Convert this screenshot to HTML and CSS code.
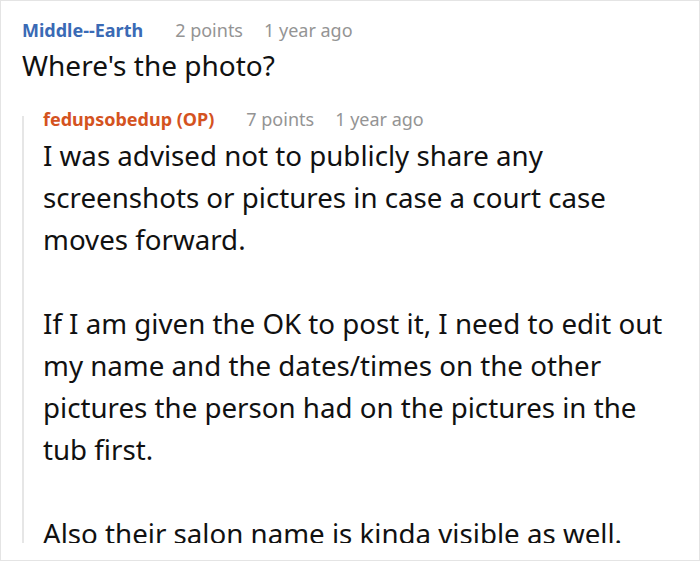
FILE: index.html
```html
<!DOCTYPE html>
<html>
<head>
<meta charset="utf-8">
<link rel="stylesheet" href="styles.css">
</head>
<body>
<div class="frame">
  <div class="clip">
    <div class="comment">
      <div class="meta">
        <span class="author blue">Middle--Earth</span>
        <span class="points">2 points</span>
        <span class="time">1 year ago</span>
      </div>
      <div class="text">Where's the photo?</div>
      <div class="reply">
        <div class="meta reply-meta">
          <span class="author orange">fedupsobedup (OP)</span>
          <span class="points">7 points</span>
          <span class="time">1 year ago</span>
        </div>
        <div class="body">
          <p>I was advised not to publicly share any screenshots or pictures in case a court case moves forward.</p>
          <p>If I am given the OK to post it, I need to edit out my name and the dates/times on the other pictures the person had on the pictures in the tub first.</p>
          <p>Also their salon name is kinda visible as well.</p>
        </div>
      </div>
    </div>
  </div>
</div>
</body>
</html>
```

FILE: styles.css
```css
html, body {
  margin: 0;
  padding: 0;
  background: #ffffff;
}
.frame {
  width: 700px;
  height: 561px;
  box-sizing: border-box;
  border: 1px solid #e4e4e4;
  background: #fff;
}
.clip {
  height: 542px;
  overflow: hidden;
}
.comment {
  padding: 14px 19px 0 21px;
  font-family: "Noto Sans", sans-serif;
  color: #111;
}
.meta {
  font-size: 18px;
  line-height: 30px;
  display: flex;
  white-space: nowrap;
}
.author {
  font-weight: 700;
  margin-right: 32px;
}
.blue { color: #3a6ab5; }
.orange { color: #d4531f; }
.points {
  color: #949494;
  margin-right: 21px;
}
.time { color: #949494; }
.text {
  font-size: 28px;
  line-height: 40px;
}
.reply {
  display: flow-root;
  margin-top: 31px;
  border-left: 2px solid #e6e6e6;
  padding: 0 0 0 19px;
}
.reply-meta {
  margin-top: -12px;
}
.body {
  font-size: 27.7px;
  line-height: 42px;
}
.body p {
  margin: 0 0 42px 0;
}
```
